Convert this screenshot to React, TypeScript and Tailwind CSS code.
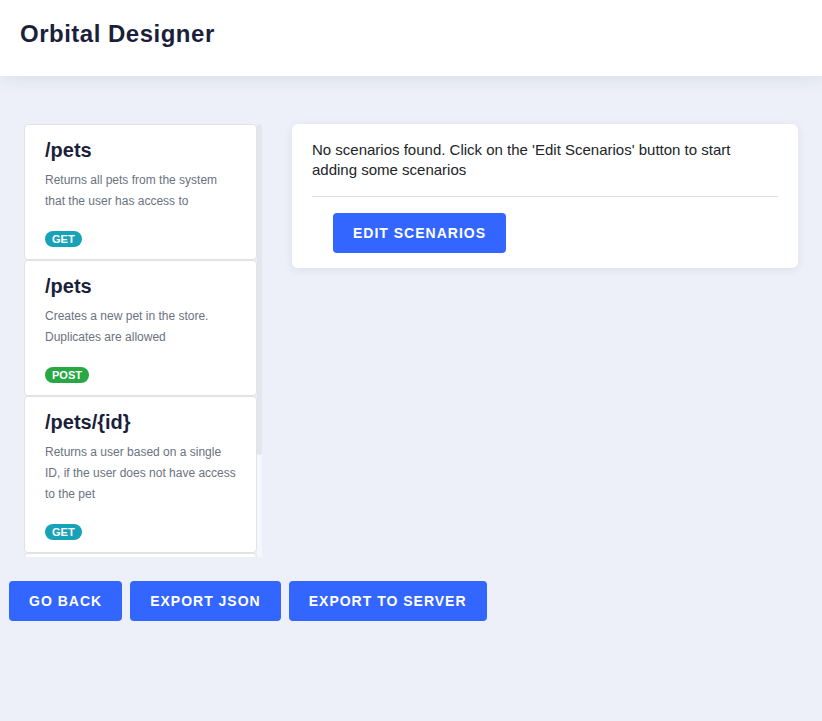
const endpoints = [
  {
    path: '/pets',
    description: 'Returns all pets from the system that the user has access to',
    method: 'GET',
  },
  {
    path: '/pets',
    description: 'Creates a new pet in the store. Duplicates are allowed',
    method: 'POST',
  },
  {
    path: '/pets/{id}',
    description: 'Returns a user based on a single ID, if the user does not have access to the pet',
    method: 'GET',
  },
  {
    path: '/pets/{id}',
    description: 'Deletes a single pet based on the ID supplied',
    method: 'DELETE',
  },
];

const methodColors: Record<string, string> = {
  GET: 'bg-[#17a2b8]',
  POST: 'bg-[#28a745]',
  DELETE: 'bg-[#dc3545]',
};

const EndpointCard = ({ path, description, method }: (typeof endpoints)[number]) => (
  <div className="bg-white border border-[#e2e2e2] rounded pl-5 pr-[18px] pt-[12px] pb-[12px]">
    <h2 className="text-[20px] leading-[26px] font-bold text-[#1b1f3b]">{path}</h2>
    <p className="mt-[7px] text-[12px] leading-[21px] text-[#6b7280]">{description}</p>
    <span
      className={`block w-fit mt-[19px] px-[7px] rounded-full text-[11px] leading-[16px] font-bold text-white ${methodColors[method]}`}
    >
      {method}
    </span>
  </div>
);

const ActionButton = ({ label }: { label: string }) => (
  <button className="h-10 px-5 rounded bg-[#3366ff] text-white text-[14px] font-bold tracking-[1px] uppercase whitespace-nowrap">
    {label}
  </button>
);

export default function App() {
  return (
    <div className="min-h-screen bg-[#edf0f8] font-['Liberation_Sans',Arial,sans-serif]">
      <header className="h-[76px] bg-white flex items-center px-5 shadow-[0_2px_18px_rgba(30,40,80,0.09)] relative">
        <h1 className="text-[24px] font-bold tracking-[0.5px] text-[#1b1f3b] -mt-[8px]">Orbital Designer</h1>
      </header>

      <main className="flex items-start gap-[30px] pt-12 px-6">
        {/* endpoint list with a thin scrollbar */}
        <div className="flex w-[238px] shrink-0 h-[433px]">
          <div className="w-[233px] overflow-hidden">
            {endpoints.map((e, i) => (
              <EndpointCard key={i} {...e} />
            ))}
          </div>
          <div className="w-[5px] bg-[#f5f7fc]">
            <div className="h-[331px] bg-[#e3e6ee] rounded-sm" />
          </div>
        </div>

        <section className="flex-1 bg-white rounded-md shadow-[0_2px_10px_rgba(30,40,80,0.08)] px-5 pt-4 pb-[15px]">
          <p className="text-[15px] leading-[20px] text-[#212529]">
            No scenarios found. Click on the 'Edit Scenarios' button to start adding some scenarios
          </p>
          <hr className="mt-4 border-t border-[#dedede]" />
          <div className="mt-[16px] pl-[21px]">
            <ActionButton label="Edit Scenarios" />
          </div>
        </section>
      </main>

      <div className="flex gap-2 pl-[9px] mt-6">
        <ActionButton label="Go Back" />
        <ActionButton label="Export JSON" />
        <ActionButton label="Export to Server" />
      </div>
    </div>
  );
}
